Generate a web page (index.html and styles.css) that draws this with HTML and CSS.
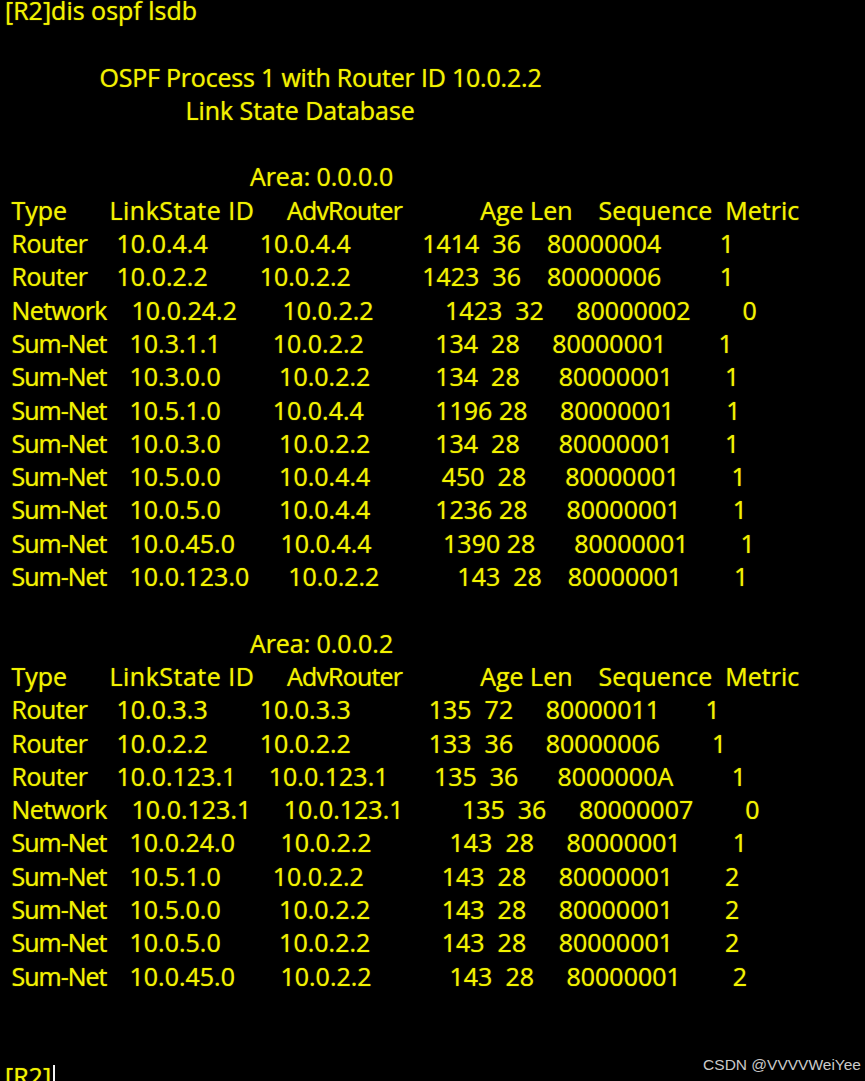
FILE: index.html
```html
<!DOCTYPE html>
<html lang="en">
<head>
<meta charset="utf-8">
<title>dis ospf lsdb</title>
<link rel="stylesheet" href="styles.css">
</head>
<body>
<main class="screen">
<div class="terminal">
<div class="line">[R2]dis ospf lsdb</div>
<div class="line"></div>
<div class="line title">               OSPF Process 1 with Router ID 10.0.2.2</div>
<div class="line subtitle">                            Link State Database</div>
<div class="line"></div>
<div class="line area">                                      Area: 0.0.0.0</div>
<div class="line"> <span class="tag head">Type</span><span class="wide">LinkState ID</span>     <span class="narrow">AdvRouter</span>            Age Len    Sequence  Metric</div>
<div class="line"> <span class="tag router">Router</span>10.0.4.4        10.0.4.4           1414  36    80000004         1</div>
<div class="line"> <span class="tag router">Router</span>10.0.2.2        10.0.2.2           1423  36    80000006         1</div>
<div class="line"> <span class="tag network">Network</span>10.0.24.2       10.0.2.2           1423  32     80000002        0</div>
<div class="line"> <span class="tag sum">Sum-Net</span>10.3.1.1        10.0.2.2           134  28     80000001        1</div>
<div class="line"> <span class="tag sum">Sum-Net</span>10.3.0.0         10.0.2.2          134  28      80000001        1</div>
<div class="line"> <span class="tag sum">Sum-Net</span>10.5.1.0        10.0.4.4           1196 28     80000001        1</div>
<div class="line"> <span class="tag sum">Sum-Net</span>10.0.3.0         10.0.2.2          134  28      80000001        1</div>
<div class="line"> <span class="tag sum">Sum-Net</span>10.5.0.0         10.0.4.4           450  28      80000001        1</div>
<div class="line"> <span class="tag sum">Sum-Net</span>10.0.5.0         10.0.4.4          1236 28      80000001        1</div>
<div class="line"> <span class="tag sum">Sum-Net</span>10.0.45.0       10.0.4.4           1390 28      80000001        1</div>
<div class="line"> <span class="tag sum">Sum-Net</span>10.0.123.0      10.0.2.2            143  28    80000001        1</div>
<div class="line"></div>
<div class="line area">                                      Area: 0.0.0.2</div>
<div class="line"> <span class="tag head">Type</span><span class="wide">LinkState ID</span>     <span class="narrow">AdvRouter</span>            Age Len    Sequence  Metric</div>
<div class="line"> <span class="tag router">Router</span>10.0.3.3        10.0.3.3            135  72     80000011       1</div>
<div class="line"> <span class="tag router">Router</span>10.0.2.2        10.0.2.2            133  36     80000006        1</div>
<div class="line"> <span class="tag router">Router</span>10.0.123.1     10.0.123.1       135  36      8000000A         1</div>
<div class="line"> <span class="tag network">Network</span>10.0.123.1     10.0.123.1         135  36     80000007        0</div>
<div class="line"> <span class="tag sum">Sum-Net</span>10.0.24.0       10.0.2.2            143  28     80000001        1</div>
<div class="line"> <span class="tag sum">Sum-Net</span>10.5.1.0        10.0.2.2            143  28     80000001        2</div>
<div class="line"> <span class="tag sum">Sum-Net</span>10.5.0.0         10.0.2.2           143  28     80000001        2</div>
<div class="line"> <span class="tag sum">Sum-Net</span>10.0.5.0         10.0.2.2           143  28     80000001        2</div>
<div class="line"> <span class="tag sum">Sum-Net</span>10.0.45.0       10.0.2.2            143  28     80000001        2</div>
<div class="line"></div>
<div class="line"></div>
<div class="line">[R2]<span class="cursor"></span></div>
</div>
<div class="watermark">CSDN @VVVVWeiYee</div>
</main>
</body>
</html>
```
FILE: styles.css
```css
html, body {
  margin: 0;
  height: 100%;
  background: #000;
  overflow: hidden;
}

.screen {
  position: relative;
  width: 865px;
  height: 1081px;
  overflow: hidden;
  background: #000;
}

.terminal {
  margin-top: -6px;
  padding-left: 5px;
  font-family: "Open Sans", sans-serif;
  font-size: 25px;
  color: #f2f200;
  text-shadow: 0 0 1px #c0c000;
}

.line {
  height: 33.3px;
  line-height: 33.3px;
  white-space: pre;
}

.title {
  letter-spacing: -0.2px;
}

.subtitle {
  letter-spacing: -0.05px;
}

.area {
  letter-spacing: -0.05px;
}

.tag {
  display: inline-block;
}

.head {
  width: 98px;
}

.router {
  width: 105px;
  letter-spacing: -0.5px;
}

.network {
  width: 120px;
  letter-spacing: -0.6px;
}

.sum {
  width: 118px;
  letter-spacing: -1px;
}

.wide {
  letter-spacing: 0.5px;
}

.narrow {
  letter-spacing: -0.8px;
}

.cursor {
  display: inline-block;
  width: 2px;
  height: 22px;
  margin-left: 2px;
  vertical-align: -1px;
  background: #f4f4f4;
}

.watermark {
  position: absolute;
  right: 4px;
  bottom: 7px;
  font-family: "Liberation Sans", sans-serif;
  font-size: 15.5px;
  line-height: 18px;
  color: #c9c9c9;
}
```
